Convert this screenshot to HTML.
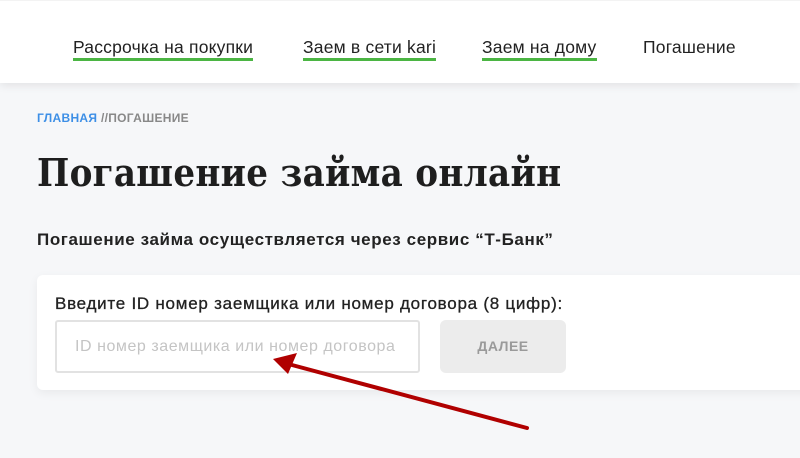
<!DOCTYPE html>
<html><head><meta charset="utf-8"><style>
body{margin:0;width:800px;height:458px;overflow:hidden;background:#f6f7f9;font-family:"Liberation Sans",sans-serif;position:relative}
.hdr{position:absolute;left:0;top:0;width:800px;height:82px;background:#fff;box-shadow:0 3px 8px rgba(0,0,0,.08);border-top:1px solid #f3f3f3}
.nav{position:absolute;top:37px;font-size:17.5px;color:#222;letter-spacing:0.2px;white-space:nowrap}
.u{border-bottom:3px solid #4bb543;padding-bottom:1px}
.bc{position:absolute;left:37px;top:111px;font-size:12px;font-weight:bold;color:#888;letter-spacing:0.3px}
.bc b{color:#3d8fe6}
h1{position:absolute;left:37px;top:150px;margin:0;font-family:"DejaVu Serif",serif;font-weight:bold;font-size:38px;color:#1e1e1e;letter-spacing:0.3px;white-space:nowrap;transform:scaleX(0.9);transform-origin:0 0}
.sub{position:absolute;left:37px;top:230px;font-size:17px;font-weight:bold;color:#222;white-space:nowrap;letter-spacing:0.6px}
.card{position:absolute;left:37px;top:275px;width:780px;height:115px;background:#fff;border-radius:6px;box-shadow:0 3px 10px rgba(0,0,0,.06)}
.lbl{position:absolute;left:55px;top:294px;font-size:17px;color:#222;white-space:nowrap;letter-spacing:0.75px;-webkit-text-stroke:0.3px #222}
.inp{position:absolute;left:55px;top:320px;height:49px;border:2px solid #e2e2e2;border-radius:3px;font-size:16px;color:#c4c4c4;line-height:49px;text-indent:18px;white-space:nowrap;width:361px;letter-spacing:0.55px}
.btn{position:absolute;left:440px;top:320px;width:126px;height:53px;background:#ececec;border-radius:6px;font-size:14px;font-weight:bold;color:#9a9a9a;text-align:center;line-height:53px;letter-spacing:.5px}
</style></head><body>
<div class="hdr"></div>
<div class="nav" style="left:73px"><span class="u">Рассрочка на покупки</span></div>
<div class="nav" style="left:303px"><span class="u">Заем в сети kari</span></div>
<div class="nav" style="left:482px"><span class="u">Заем на дому</span></div>
<div class="nav" style="left:643px">Погашение</div>
<div class="bc"><b>ГЛАВНАЯ</b> //ПОГАШЕНИЕ</div>
<h1>Погашение займа онлайн</h1>
<div class="sub">Погашение займа осуществляется через сервис “Т-Банк”</div>
<div class="card"></div>
<div class="lbl">Введите ID номер заемщика или номер договора (8 цифр):</div>
<div class="inp">ID номер заемщика или номер договора</div>
<div class="btn">ДАЛЕЕ</div>
<svg style="position:absolute;left:0;top:0" width="800" height="458">
<path d="M527 428 L292 365" stroke="#b00000" stroke-width="4" stroke-linecap="round"/>
<path d="M273 359 L297 353 L288 374 Z" fill="#b00000"/>
</svg>
</body></html>
